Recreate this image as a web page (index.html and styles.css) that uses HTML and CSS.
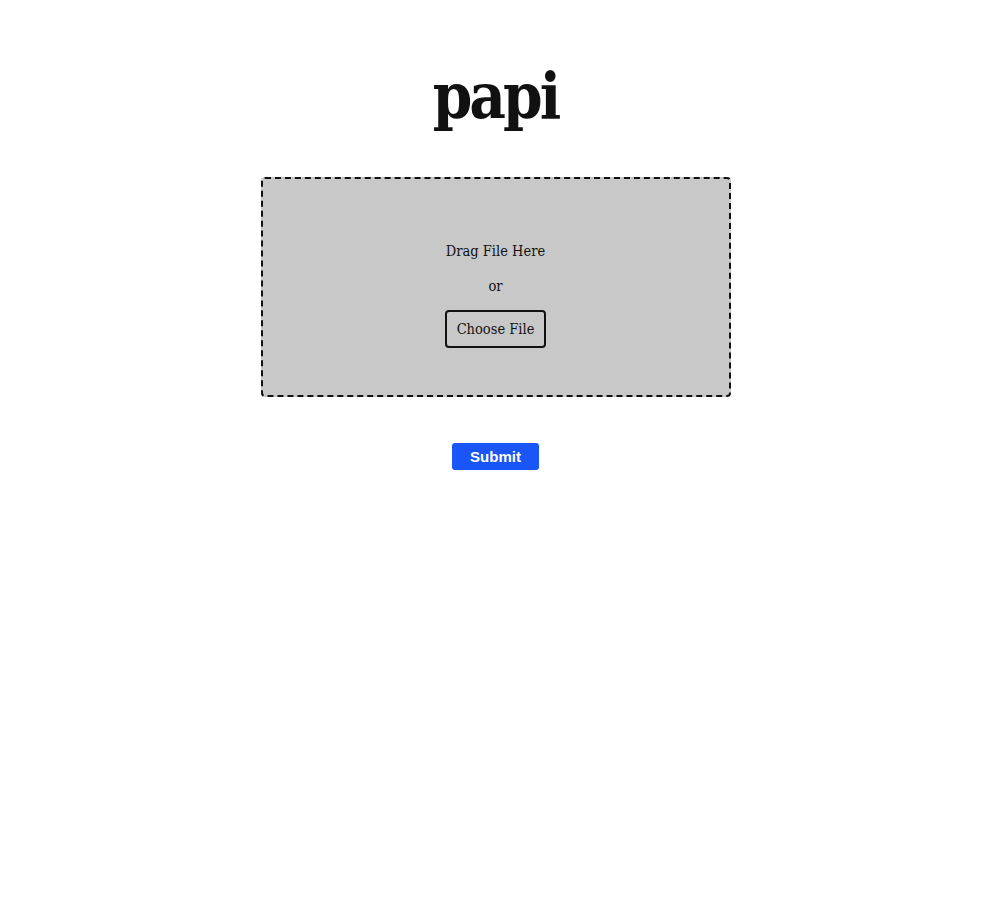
FILE: index.html
```html
<!DOCTYPE html>
<html>
<head>
<meta charset="utf-8">
<title>papi</title>
<link rel="stylesheet" href="styles.css">
</head>
<body>
<main class="page">
  <h1 class="title">papi</h1>
  <form class="upload">
    <div class="dropzone">
      <p class="drop-text">Drag File Here</p>
      <p class="or">or</p>
      <label class="choose">Choose File</label>
    </div>
    <button type="button" class="submit">Submit</button>
  </form>
</main>
</body>
</html>
```
FILE: styles.css
```css
html, body {
  margin: 0;
  padding: 0;
  background: #fff;
}
.page {
  width: 991px;
  display: flex;
  flex-direction: column;
  align-items: center;
  font-family: "DejaVu Serif Condensed", "DejaVu Serif", serif;
  color: #111;
}
.title {
  margin: 52px 0 0;
  font-size: 63px;
  line-height: 88px;
  font-weight: bold;
  letter-spacing: -3px;
}
.upload {
  display: flex;
  flex-direction: column;
  align-items: center;
  margin-top: 37px;
}
.dropzone {
  box-sizing: border-box;
  width: 470px;
  height: 220px;
  padding-top: 14px;
  background: #c8c8c8;
  border: 2px dashed #111;
  border-radius: 4px;
  display: flex;
  flex-direction: column;
  align-items: center;
  justify-content: center;
  font-size: 14.5px;
}
.drop-text, .or {
  margin: 0;
  line-height: 20px;
}
.or {
  margin-top: 15px;
}
.choose {
  margin-top: 14px;
  box-sizing: border-box;
  height: 38px;
  width: 101px;
  justify-content: center;
  display: flex;
  align-items: center;
  border: 2px solid #111;
  border-radius: 4px;
}
.submit {
  margin-top: 46px;
  width: 87px;
  height: 27px;
  border: none;
  border-radius: 3px;
  background: #1a55f7;
  color: #fff;
  font-family: "Liberation Sans", Arial, sans-serif;
  font-weight: bold;
  font-size: 15px;
  padding: 0;
}
```
